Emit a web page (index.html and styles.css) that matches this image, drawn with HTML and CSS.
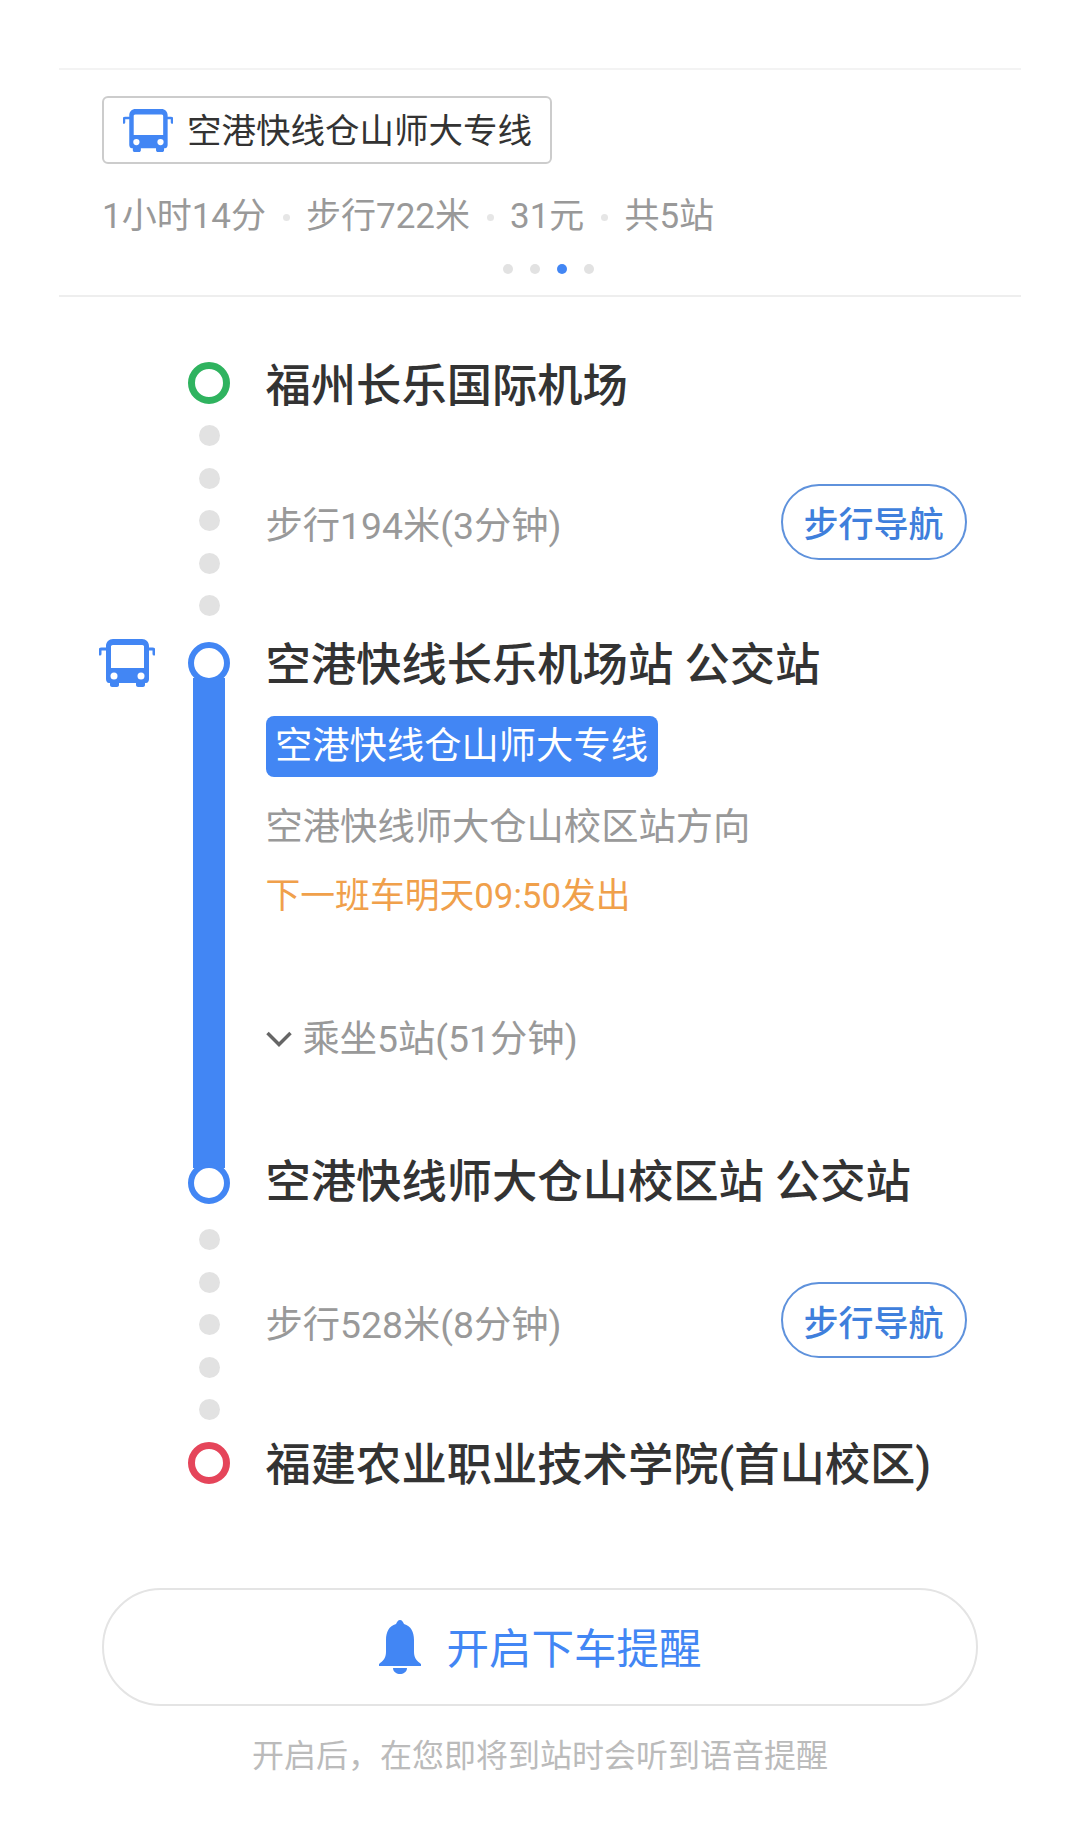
FILE: index.html
```html
<!DOCTYPE html>
<html>
  <head>
    <meta charset="utf-8">
    <link rel="stylesheet" href="styles.css">
  </head>
  <body>
    <svg class="defs" width="0" height="0">
      <symbol id="bus" viewBox="0 0 56 48">
        <path d="M8 10H2.500C1.500 10 1 10.500 1 11.500V15M49 10H53.500C54.500 10 55 10.500 55 11.500V15" fill="none" stroke="currentColor" stroke-width="3" stroke-linecap="round"/>
        <path d="M14 0H43C47 0 50 3 50 7V40C50 42 49 44 47 44H46V46C46 47 45 48 44 48H39C38 48 37 47 37 46V44H20V46C20 47 19 48 18 48H13C12 48 11 47 11 46V44H10C8 44 7 42 7 40V7C7 3 10 0 14 0ZM14 6C12 6 12 7 12 8V29H45V8C45 7 45 6 43 6Z" fill="currentColor"/>
        <circle cx="15" cy="37" r="3.500" fill="#fff"/>
        <circle cx="42" cy="37" r="3.500" fill="#fff"/>
      </symbol>
    </svg>

    <div class="summary">
      <div class="line-tag">
        <svg class="tag-icon"><use href="#bus"/></svg>
        <span>空港快线仓山师大专线</span>
      </div>
      <div class="facts">
        <span>1小时14分</span><i></i>
        <span>步行722米</span><i></i>
        <span>31元</span><i></i>
        <span>共5站</span>
      </div>
      <div class="pager">
        <i></i><i></i><i class="on"></i><i></i>
      </div>
    </div>

    <div class="route">
      <div class="row station start">
        <div class="rail"><span class="ring green"></span></div>
        <div class="name">福州长乐国际机场</div>
      </div>

      <div class="row walk">
        <div class="rail dots"><i></i><i></i><i></i><i></i><i></i></div>
        <div class="walk-info">
          <span class="muted">步行194米(3分钟)</span>
          <button class="nav-btn">步行导航</button>
        </div>
      </div>

      <div class="row ride">
        <svg class="mode-icon"><use href="#bus"/></svg>
        <div class="rail">
          <span class="ring blue"></span>
          <span class="bar"></span>
          <span class="ring blue"></span>
        </div>
        <div>
          <div class="name">空港快线长乐机场站 公交站</div>
          <div class="badge">空港快线仓山师大专线</div>
          <div class="muted direction">空港快线师大仓山校区站方向</div>
          <div class="next-bus">下一班车明天09:50发出</div>
          <div class="muted stops">
            <svg class="chevron" viewBox="0 0 26 16"><path d="M1.500 2L13 13.500L24.500 2" fill="none" stroke="#666" stroke-width="3.500"/></svg>
            <span>乘坐5站(51分钟)</span>
          </div>
          <div class="name ride-end">空港快线师大仓山校区站 公交站</div>
        </div>
      </div>

      <div class="row walk walk-last">
        <div class="rail dots"><i></i><i></i><i></i><i></i><i></i></div>
        <div class="walk-info">
          <span class="muted">步行528米(8分钟)</span>
          <button class="nav-btn">步行导航</button>
        </div>
      </div>

      <div class="row station">
        <div class="rail"><span class="ring red"></span></div>
        <div class="name">福建农业职业技术学院(首山校区)</div>
      </div>
    </div>

    <button class="remind">
      <svg class="bell" viewBox="0 0 44 54">
        <path d="M22 0C24 0 25 2 26 4C33 6 36 12 36 20V32C36 38 39 41 43 44V46H1V44C5 41 8 38 8 32V20C8 12 11 6 18 4C19 2 20 0 22 0Z" fill="#4286f4"/>
        <path d="M15 48H29C29 52 25 54 22 54C19 54 15 52 15 48Z" fill="#4286f4"/>
      </svg>
      <span class="remind-text">开启下车提醒</span>
    </button>
    <p class="hint">开启后，在您即将到站时会听到语音提醒</p>
  </body>
</html>
```

FILE: styles.css
```css
* {
  box-sizing: border-box;
}
body {
  margin: 0;
  padding-top: 68px;
  background: #fff;
  color: #333;
  font-family: Roboto, "Noto Sans CJK SC", sans-serif;
}
.defs {
  position: absolute;
}
i {
  display: block;
}

.summary {
  margin: 0 59px;
  padding: 26px 0 21px 43px;
  border-top: 2px solid #f3f3f3;
  border-bottom: 2px solid #eee;
}
.line-tag {
  display: inline-flex;
  align-items: center;
  gap: 14px;
  height: 68px;
  padding: 0 18px 0 19px;
  border: 2px solid #ccc;
  border-radius: 6px;
  font-size: 34.500px;
  line-height: 1;
}
.line-tag span {
  margin-top: 2px;
}
.tag-icon {
  width: 50px;
  height: 43px;
  color: #4286f4;
}
.facts {
  display: flex;
  align-items: center;
  gap: 16.500px;
  margin-top: 28px;
  color: #999;
  font-size: 35px;
  line-height: 50px;
}
.facts i {
  width: 7px;
  height: 7px;
  border-radius: 50%;
  background: #e6e6e6;
}
.pager {
  display: flex;
  justify-content: center;
  gap: 17px;
  margin-top: 22px;
  padding-right: 27px;
}
.pager i {
  width: 10px;
  height: 10px;
  border-radius: 50%;
  background: #e2e2e2;
}
.pager .on {
  background: #4286f4;
}

.route {
  padding: 62px 0 0 99px;
}
.row {
  display: grid;
  grid-template-columns: 56px 42px 1fr;
  column-gap: 33px;
}
.row .rail {
  grid-column: 2;
}
.row > div:last-child {
  grid-column: 3;
  margin-left: 2.500px;
}
.rail {
  display: flex;
  flex-direction: column;
  align-items: center;
}
.ring {
  flex: none;
  width: 42px;
  height: 42px;
  margin-top: 4px;
  border: 7px solid;
  border-radius: 50%;
  background: #fff;
}
.start .ring {
  margin-top: 3px;
}
.green {
  border-color: #2fb35f;
}
.red {
  border-color: #e5455a;
}
.blue {
  border-width: 6px;
  border-color: #4286f4;
}
.bar {
  flex: 1;
  width: 32px;
  margin: -6px 0;
  background: #4286f4;
}
.ride .ring:last-child {
  margin: 0 0 7px;
}
.name {
  font-size: 45.300px;
  font-weight: 500;
  line-height: 56px;
  white-space: nowrap;
}
.muted {
  color: #999;
  font-size: 37.300px;
}

.walk {
  height: 223px;
}
.walk-last {
  height: 227px;
}
.dots {
  gap: 21.500px;
  padding-top: 10px;
}
.dots i {
  width: 21px;
  height: 21px;
  border-radius: 50%;
  background: #e2e2e2;
}
.walk-last .dots {
  padding-top: 18px;
}
.walk-info {
  display: flex;
  justify-content: space-between;
  align-items: center;
  height: 216px;
  padding-right: 113.500px;
}
.walk-last .walk-info {
  height: 221px;
}
.nav-btn {
  width: 186px;
  height: 76px;
  margin-top: -3px;
  padding: 0;
  border: 2px solid #5f92dc;
  border-radius: 38px;
  background: #fff;
  color: #3f7fdc;
  font-family: inherit;
  font-size: 35px;
  font-weight: 500;
}

.mode-icon {
  width: 56px;
  height: 48px;
  margin-top: 1px;
  color: #4286f4;
}
.badge {
  width: 392px;
  height: 61px;
  margin-top: 22px;
  border-radius: 8px;
  background: #4286f4;
  color: #fff;
  font-size: 37.300px;
  line-height: 61px;
  text-align: center;
  white-space: nowrap;
}
.direction {
  margin-top: 25px;
  line-height: 50px;
}
.next-bus {
  margin-top: 19px;
  color: #f0a04b;
  font-size: 34.800px;
  line-height: 50px;
}
.stops {
  display: flex;
  align-items: center;
  gap: 11px;
  margin-top: 93px;
  line-height: 50px;
}
.chevron {
  width: 26px;
  height: 16px;
}
.ride-end {
  margin-top: 91px;
}

.remind {
  display: flex;
  justify-content: center;
  align-items: center;
  gap: 24px;
  width: 876px;
  height: 118px;
  margin: 94px 0 0 102px;
  padding: 0;
  border: 2px solid #e4e4e4;
  border-radius: 59px;
  background: #fff;
  color: #4286f4;
  font-family: inherit;
  font-size: 42.500px;
}
.remind-text {
  margin-top: -3px;
}
.bell {
  width: 44px;
  height: 54px;
}
.hint {
  margin: 27px 0 0;
  color: #bbb;
  font-size: 32px;
  line-height: 46px;
  text-align: center;
}
```
